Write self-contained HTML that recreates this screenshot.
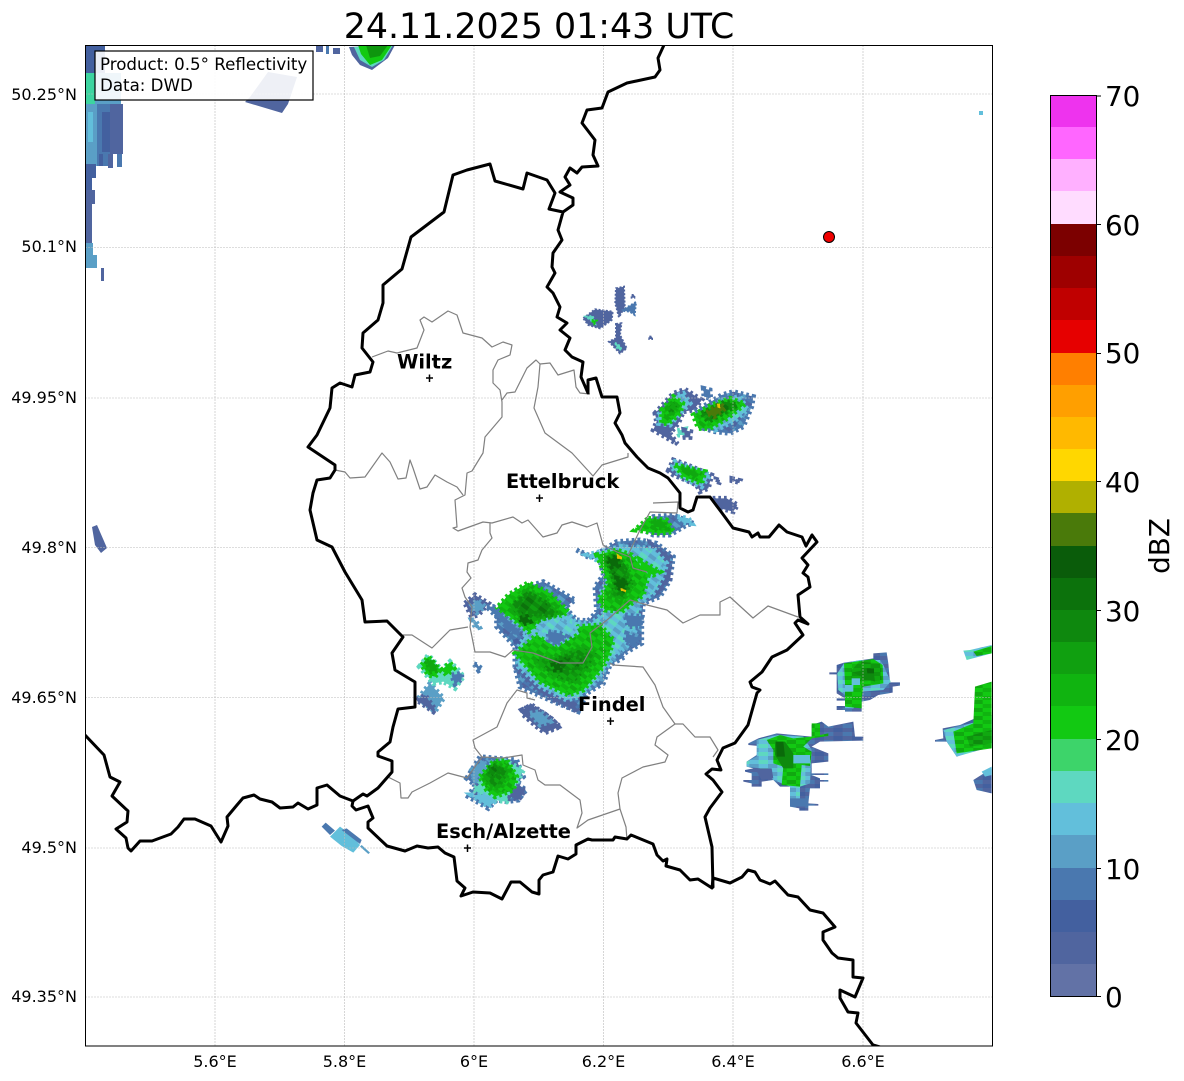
<!DOCTYPE html>
<html lang="en">
<head>
<meta charset="utf-8">
<title>Radar</title>
<style>
html,body{margin:0;padding:0;background:#fff;width:1184px;height:1081px;overflow:hidden}
svg{display:block}
text{font-family:"DejaVu Sans","Liberation Sans",sans-serif;fill:#000}
.g{stroke:#bbb;stroke-width:.6;stroke-dasharray:2 1;fill:none}
.t{font-size:16px}
.c{font-size:27.8px}
.l{font-size:19.4px;font-weight:bold}
.bd{fill:none;stroke:#000;stroke-width:3;stroke-linejoin:round;stroke-linecap:round}
.cn{fill:none;stroke:#808080;stroke-width:1.2;stroke-linejoin:round}
.e{stroke-width:15;stroke-dasharray:8 9}
.a{fill:#50659f;stroke:#50659f}
.b{fill:#43609f;stroke:#43609f}
.d{fill:#4a78af;stroke:#4a78af}
.f{fill:#5a9fc6;stroke:#5a9fc6}
.h{fill:#62bfdb;stroke:#62bfdb}
.i{fill:#5ed8c0;stroke:#5ed8c0}
.j{fill:#3dd46a;stroke:#3dd46a}
.k{fill:#12c912;stroke:#12c912}
.m{fill:#10a810;stroke:#10a810}
.n{fill:#0e8a0e;stroke:#0e8a0e}
.o{fill:#0a6a0a;stroke:#0a6a0a}
.p{fill:#4a7a0a;stroke:#4a7a0a}
.q{fill:#e6c200;stroke:#e6c200}
.K{fill:url(#pk);stroke:#12c912}
.M{fill:url(#pm);stroke:#10a810}
.N{fill:url(#pn);stroke:#0e8a0e}
.H{fill:url(#ph);stroke:#62bfdb}
.D{fill:url(#pd);stroke:#4a78af}
.K2{fill:url(#qk)}
.M2{fill:url(#qm)}
.H2{fill:url(#qh)}
.A2{fill:url(#qa)}
</style>
</head>
<body>
<svg width="1184" height="1081" viewBox="0 0 1184 1081" xmlns="http://www.w3.org/2000/svg">
<defs>
<clipPath id="ax"><rect x="85.5" y="45.5" width="907" height="1000.5"/></clipPath>
<pattern id="pk" width="48" height="24" patternUnits="userSpaceOnUse" patternTransform="rotate(37)"><rect width="48" height="24" fill="#12c912"/><rect width="24" height="12" fill="#10b410"/><rect x="24" y="12" width="24" height="12" fill="#10a810"/></pattern>
<pattern id="pm" width="48" height="24" patternUnits="userSpaceOnUse" patternTransform="rotate(37)"><rect width="48" height="24" fill="#10a810"/><rect width="24" height="12" fill="#0e960e"/><rect x="24" y="12" width="24" height="12" fill="#0e8a0e"/></pattern>
<pattern id="pn" width="48" height="24" patternUnits="userSpaceOnUse" patternTransform="rotate(37)"><rect width="48" height="24" fill="#0e8a0e"/><rect width="24" height="12" fill="#0c720c"/><rect x="24" y="12" width="24" height="12" fill="#10a010"/></pattern>
<pattern id="ph" width="48" height="24" patternUnits="userSpaceOnUse" patternTransform="rotate(37)"><rect width="48" height="24" fill="#62bfdb"/><rect width="24" height="12" fill="#5ed8c0"/><rect x="24" y="12" width="24" height="12" fill="#5a9fc6"/></pattern>
<pattern id="pd" width="48" height="24" patternUnits="userSpaceOnUse" patternTransform="rotate(37)"><rect width="48" height="24" fill="#4a78af"/><rect width="24" height="12" fill="#50659f"/><rect x="24" y="12" width="24" height="12" fill="#5a9fc6"/></pattern>
<pattern id="qk" width="56" height="24" patternUnits="userSpaceOnUse"><rect width="56" height="24" fill="#12c912"/><rect width="28" height="12" fill="#10b410"/><rect x="28" y="12" width="28" height="12" fill="#10a810"/></pattern>
<pattern id="qm" width="56" height="24" patternUnits="userSpaceOnUse"><rect width="56" height="24" fill="#10a810"/><rect width="28" height="12" fill="#0e960e"/><rect x="28" y="12" width="28" height="12" fill="#0e8a0e"/></pattern>
<pattern id="qh" width="56" height="24" patternUnits="userSpaceOnUse"><rect width="56" height="24" fill="#62bfdb"/><rect width="28" height="12" fill="#5ed8c0"/><rect x="28" y="12" width="28" height="12" fill="#5a9fc6"/></pattern>
<pattern id="qa" width="56" height="24" patternUnits="userSpaceOnUse"><rect width="56" height="24" fill="#50659f"/><rect width="28" height="12" fill="#43609f"/><rect x="28" y="12" width="28" height="12" fill="#4a78af"/></pattern>
</defs>

<text x="539" y="38" text-anchor="middle" style="font-size:34.8px">24.11.2025 01:43 UTC</text>

<g clip-path="url(#ax)">
<!-- top-left block echoes -->
<g>
<rect x="85" y="45" width="20" height="30" fill="#43609f"/>
<rect x="85" y="73" width="10" height="32" fill="#3dd4a0"/>
<rect x="95" y="73" width="26" height="32" fill="#5a9fc6"/>
<rect x="85" y="104" width="12" height="62" fill="#5a9fc6"/>
<rect x="88" y="112" width="5" height="30" fill="#62bfdb"/>
<rect x="97" y="104" width="13" height="62" fill="#4a78af"/>
<rect x="102" y="112" width="8" height="40" fill="#43609f"/>
<rect x="110" y="104" width="13" height="50" fill="#50659f"/>
<rect x="108" y="154" width="5" height="14" fill="#50659f"/>
<rect x="117" y="154" width="5" height="13" fill="#4a78af"/>
<rect x="99" y="154" width="4" height="12" fill="#43609f"/>
<rect x="85" y="164" width="11" height="14" fill="#43609f"/>
<rect x="85" y="176" width="7" height="34" fill="#43609f"/>
<rect x="85" y="190" width="10" height="14" fill="#50659f"/>
<rect x="85" y="204" width="7" height="40" fill="#50659f"/>
<rect x="85" y="243" width="8" height="25" fill="#5a9fc6"/>
<rect x="92" y="255" width="5" height="13" fill="#5a9fc6"/>
<rect x="101" y="268" width="3" height="13" fill="#50659f"/>
<polygon points="250,97 268,72 297,77 288,104 282,113 245,102" fill="#50659f"/>
<rect x="316" y="45" width="7" height="7" fill="#50659f"/>
<rect x="326" y="46" width="3" height="8" fill="#4a78af"/>
<rect x="333" y="48" width="7" height="6" fill="#50659f"/>
</g>
<!-- top echo -->
<g>
<polygon points="349,47 395,45 388,58 372,70 360,65 352,55" fill="#50659f"/>
<polygon points="354,47 393,45 384,60 372,67 360,60" fill="#5ed8c0"/>
<polygon points="358,45 392,45 382,60 370,65 361,54" fill="#12c912"/>
<polygon points="366,45 388,45 380,56 370,58" fill="#0e960e"/>
</g>
<rect x="979" y="111" width="4" height="4" fill="#62bfdb"/>
<polygon points="92,527 97,525 107,548 101,553 95,545" fill="#50659f"/>

<!-- small echoes NE -->
<g transform="translate(540 40) scale(.33333)" class="e" style="stroke-width:6;stroke-dasharray:6 5">
<polygon class="a" points="130,835 165,808 218,815 215,840 180,865 145,855"/>
<polygon class="i" points="137,830 158,828 165,850"/>
<polygon class="k" points="155,840 170,842 162,852"/>
<polygon class="a" points="228,745 252,740 254,800 237,832 226,790"/>
<polygon class="d" points="245,812 288,786 284,825 270,815"/>
<polygon class="a" points="228,852 244,850 240,885 260,925 240,940 207,905 228,895"/>
<polygon class="i" points="225,908 240,918 245,930 232,925"/>
<rect class="a" x="328" y="890" width="8" height="7"/>
<rect class="a" x="275" y="765" width="8" height="8"/>
</g>

<!-- double echo -->
<g transform="translate(640 380) scale(.33333)" class="e">
<polygon class="a" points="45,100 100,40 135,28 185,60 160,90 130,95 115,130 90,160 112,192 40,150 50,125"/>
<polygon class="H" points="55,105 100,50 130,40 150,70 120,100 90,135 55,130"/>
<polygon class="K" points="65,90 100,50 128,70 120,100 85,130 65,130"/>
<polygon class="M" points="82,85 100,65 112,80 90,110"/>
<polygon class="i" points="112,152 135,148 130,165 118,165"/>
<polygon class="a" points="132,150 152,155 150,172 135,172"/>
<polygon class="d" points="190,25 210,30 212,55 192,50"/>
<polygon class="D" points="165,95 245,45 280,35 340,50 335,80 310,140 270,160 225,155 190,145"/>
<polygon class="H" points="175,100 250,60 300,50 322,90 280,125 225,150"/>
<polygon class="K" points="160,105 215,75 270,55 315,72 262,115 210,145 175,145"/>
<polygon class="N" points="185,100 255,65 292,75 240,105 205,125"/>
<polygon class="p" points="200,98 240,72 255,85 222,110"/>
<polygon class="q" points="232,72 240,72 240,84 232,82" style="stroke-width:2"/>
</g>
<g transform="translate(640 380) scale(.33333)" class="e">
<polygon class="a" points="85,272 100,240 130,250 215,285 205,325 180,335 170,315 125,295 100,285"/>
<polygon class="H" points="95,262 105,245 210,285 185,320 130,295"/>
<polygon class="K" points="105,255 195,275 185,310 130,290"/>
<polygon class="m" points="125,262 170,275 165,295"/>
<polygon class="a" points="228,298 240,302 238,307 228,304"/>
<polygon class="a" points="276,296 300,302 298,307 276,302"/>
<polygon class="a" points="218,355 260,355 292,375 280,395 240,385"/>
</g>

<!-- big main echo -->
<g transform="translate(440 500) scale(.33333)" class="e">
<polygon class="D" points="600,85 640,50 700,45 760,70 740,75 690,105 640,105"/>
<polygon class="K" points="625,55 680,60 700,95 660,100 585,90"/>
<polygon class="m" points="640,60 670,65 680,85 640,80"/>
<polygon class="h" points="712,50 745,55 755,70 730,68"/>

<polygon class="D" points="410,150 450,175 530,125 600,120 650,130 700,170 690,240 660,290 610,310 605,370 605,430 545,465 555,470 510,495 490,550 440,580 415,635 340,605 240,560 225,500 225,440 170,380 170,330 230,270 310,245 405,300 375,322 410,360 445,362 470,335 465,260 490,225 480,180"/>
<polygon class="a" points="630,130 690,170 690,235 650,285 640,200"/>
<polygon class="a" points="225,500 290,570 340,600 415,635 400,610 300,530"/>
<polygon class="b" points="228,425 245,422 280,460 240,455"/>
<polygon class="H" points="540,140 640,145 680,190 670,230 640,280 600,310 590,380 570,430 520,470 500,500 470,540 420,590 380,600 300,560 235,500 230,450 260,400 200,360 180,330 260,270 370,322 405,365 450,372 490,340 480,280 510,230 490,190 440,165"/>
<polygon class="d" points="555,345 605,350 600,378 565,380"/>
<polygon class="d" points="560,400 600,415 580,435 555,425"/>
<polygon class="K" points="165,330 205,285 265,248 330,280 385,335 350,355 300,375 265,395 210,350"/>
<polygon class="K" points="225,460 290,405 345,440 415,380 480,375 520,420 505,470 490,500 430,570 385,585 300,545"/>
<polygon class="K" points="470,165 530,150 575,165 625,225 610,285 575,310 545,335 495,330 475,300 505,250 485,200"/>
<polygon class="k" points="600,180 660,215 640,225 605,210"/>
<polygon class="H" points="300,365 360,352 405,372 415,395 350,435 315,405 285,395"/>
<polygon class="d" points="325,395 360,400 380,410 350,435 325,420"/>
<polygon class="M" points="210,320 265,270 320,300 360,340 300,360 250,370"/>
<polygon class="M" points="280,480 350,470 420,440 470,460 440,510 400,550 340,530"/>
<polygon class="M" points="490,170 530,160 560,200 580,250 550,300 510,290 520,240"/>
<polygon class="N" points="225,310 265,280 320,310 340,345 290,340 250,345"/>
<polygon class="N" points="330,490 390,465 430,475 410,510 360,510"/>
<polygon class="N" points="500,175 530,165 550,200 565,255 540,285 525,250"/>
<polygon class="o" points="505,180 530,170 535,195 515,200"/>
<polygon class="o" points="240,355 260,350 270,365 250,372"/>
<polygon class="o" points="340,495 360,490 360,510 345,510"/>
<polygon class="o" points="530,235 560,245 550,270 530,260"/>
<polygon class="q" points="530,162 545,170 545,178 532,175" style="stroke-width:2"/>
<polygon class="q" points="542,265 558,270 556,276 544,272" style="stroke-width:2"/>
<polygon class="a" points="75,310 105,285 145,310 115,345 95,350"/>
<polygon class="f" points="90,320 112,300 135,320 110,338"/>
<polygon class="d" points="140,320 160,320 240,395 225,405"/>
<polygon class="f" points="95,360 105,360 118,382 108,385"/>
<polygon class="f" points="102,492 112,495 125,506 116,510"/>
<polygon class="a" points="245,630 275,615 340,660 355,680 310,695 270,660"/>
<polygon class="f" points="270,640 300,635 335,665 305,680"/>
</g>

<!-- left echo -->
<g transform="translate(380 620) scale(.33333)" class="e">
<polygon class="f" points="115,235 150,190 190,235 165,275"/>
<polygon class="a" points="110,240 135,225 165,268 160,275"/>
<polygon class="i" points="118,140 145,105 185,150 210,125 235,150 250,170 225,205 190,185 160,190"/>
<polygon class="K" points="125,135 145,110 180,150 165,170 145,165"/>
<polygon class="m" points="140,125 155,120 172,150 155,155"/>
<polygon class="k" points="185,150 210,128 222,145 200,165"/>
<polygon class="d" points="215,165 245,160 245,178 225,192"/>
<polygon class="d" points="282,132 292,135 304,148 296,152"/>
<!-- Esch echo -->
<polygon class="D" points="260,475 300,410 350,415 410,420 430,470 410,490 438,510 415,540 380,545 350,540 325,565 265,530 285,495"/>
<polygon class="i" points="370,420 430,450 410,490 380,545 340,540 280,510 300,490 320,440"/>
<polygon class="h" points="275,525 325,525 350,540 325,560"/>
<polygon class="f" points="275,450 310,420 320,450 285,480"/>
<polygon class="a" points="395,495 435,510 415,540 390,530"/>
<polygon class="K" points="300,470 340,425 380,420 410,470 400,510 345,530 320,510"/>
<polygon class="M" points="310,470 345,430 390,450 360,505 330,500"/>
<polygon class="N" points="325,445 350,435 365,460 340,475"/>
<!-- below-big echo -->
<polygon class="a" points="425,280 445,255 500,285 540,320 495,338 470,320"/>
<polygon class="f" points="450,280 480,275 510,305 480,315"/>
</g>

<!-- esch lower-left -->
<g transform="translate(85 720) scale(.33333)">
<polygon points="710,320 722,308 750,332 735,345" fill="#4a78af"/>
<polygon points="735,350 765,320 800,345 825,375 805,398 770,378" fill="#62bfdb"/>
<polygon points="770,330 785,325 830,360 825,372" fill="#4a78af"/>
<polygon points="825,380 830,375 855,398 850,402" fill="#5a9fc6"/>
</g>

<!-- east echoes -->
<g transform="translate(740 640) scale(.33333)">
<polygon class="A2" points="400,40 440,37 445,70 450,127 480,127 480,137 458,140 458,158 415,165 390,180 365,185 365,215 315,215 315,210 290,210 290,198 315,198 315,182 290,182 290,175 315,175 290,160 290,103 268,103 268,97 290,97 290,75 312,68 400,55"/>
<polygon class="H2" points="292,100 312,70 360,60 420,60 430,75 452,125 430,150 365,155 365,175 340,205 315,205 315,165 295,150"/>
<polygon class="K2" points="312,70 400,57 428,75 430,130 370,140 365,175 365,205 315,200 315,130"/>
<polygon class="M2" points="335,90 358,65 420,70 425,120 365,125 335,115"/>
<polygon class="n" points="338,97 400,85 405,125 365,110" stroke="none" style="stroke:none"/>
<polygon class="o" points="380,85 402,85 402,100 382,100" style="stroke:none"/>
<polygon class="h" points="335,115 360,115 360,135 335,135" style="stroke:none"/>
<polygon class="h" points="315,135 340,135 340,155 315,155" style="stroke:none"/>

<polygon class="A2" points="25,310 55,295 110,280 215,290 215,255 245,245 265,260 340,245 345,290 370,290 370,302 240,305 215,320 240,330 265,340 265,365 215,370 215,400 265,400 265,405 215,405 240,415 240,420 265,420 265,425 240,425 240,445 210,445 205,490 235,492 235,497 205,497 205,512 178,512 178,505 150,500 150,440 120,440 100,420 65,425 65,440 35,440 35,430 10,425 10,420 35,420 35,400 15,395 15,390 40,385 20,380 20,365 50,345 55,318 25,315"/>
<polygon class="d" points="150,475 205,475 205,500 150,500" style="stroke:none"/>
<polygon class="H2" points="50,300 110,285 190,290 215,330 210,430 180,440 180,475 150,475 150,440 100,420 60,385 20,380 20,365 50,350"/>
<polygon class="a" points="45,385 95,385 100,415 65,420" style="stroke:none"/>
<polygon class="K2" points="80,300 120,285 160,295 215,290 215,250 240,250 240,285 265,280 265,288 215,295 190,320 215,335 210,378 185,375 180,440 125,435 130,380 100,370 100,330"/>
<polygon class="n" points="105,305 135,305 160,340 160,385 130,385 105,345" style="stroke:none"/>
<polygon class="o" points="108,305 130,305 135,350 110,350" style="stroke:none"/>
<polygon class="h" points="160,345 210,345 210,370 160,370" style="stroke:none"/>

<polygon class="H2" points="670,32 690,30 755,15 755,40 680,60"/>
<polygon class="K2" points="700,35 755,18 755,40 710,48"/>
<polygon class="A2" points="585,300 610,295 608,265 660,255 705,235 755,225 755,310 650,350 620,305 585,305"/>
<polygon class="H2" points="610,270 660,258 755,235 755,320 650,350 620,305"/>
<polygon class="K2" points="640,275 700,250 705,140 755,125 755,325 650,340"/>
<polygon class="M2" points="680,290 755,270 755,310 690,320"/>
<polygon class="A2" points="700,420 755,385 755,460 710,450"/>
<polygon class="h" points="725,395 755,380 755,405 735,410" style="stroke:none"/>
</g>

<!-- gridlines -->
<g class="g">
<path d="M215 45V1046M344.5 45V1046M474 45V1046M603.5 45V1046M733 45V1046M863 45V1046"/>
<path d="M85 94H992M85 247.5H992M85 398H992M85 547.5H992M85 697.5H992M85 848H992M85 997H992"/>
</g>

<!-- canton lines -->
<g class="cn">
<path d="M372 357L388 351 397 353 417 348 424 330 420 320 424 317 432 322 448 311 457 315 463 333 482 338 492 347 503 342 512 345 510 355 498 360 493 370 493 383 500 390 502 402 502 417 485 437 483 453 472 471 467 473 465 495 455 500 457 527 453 528 458 531 483 522 492 523 513 517 522 523 528 520 543 537 557 533 562 525 572 522 587 527 597 523 603 545 617 552 630 557 633 568 647 572"/>
<path d="M653 503L678 502 677 513 650 512 640 530 628 555"/>
<path d="M490 523L490 533 492 538 482 550 478 560 468 563 467 572 471 578 462 588 465 597 472 607 470 627 475 652 490 652 505 657 513 650 533 653 560 663 583 663 592 647 590 633 607 620 630 600 647 605 667 610 683 623 700 615 720 615 720 602 730 597 753 618 768 606 798 617"/>
<path d="M403 635L412 635 432 648 450 630 468 627"/>
<path d="M535 700L527 698 527 693 517 690 507 703 497 727 473 740 475 748 482 757 467 778 448 773 430 783 412 792 408 798 401 798 400 783 388 777"/>
<path d="M482 757L503 758 522 755 523 765 535 770 538 780 545 785 560 785 580 800 582 813 577 828 588 820 620 809 626 827 627 840"/>
<path d="M620 809L618 793 622 778 643 767 665 762 668 755 655 745 657 737 675 724 663 707 655 685 643 667 613 665 610 663"/>
<path d="M675 724L683 724 695 737 710 737 718 750 713 757"/>
<path d="M502 400L507 393 515 392 527 368 536 360 540 364 538 387 534 408 545 433 572 453 593 476 602 465 628 457 628 453"/>
<path d="M540 364L550 363 558 375 574 370 576 387 580 393 590 394"/>
<path d="M335 470L345 472 350 478 365 477 382 453 390 462 398 479 406 478 410 460 413 468 420 489 427 487 435 475 447 482 457 487 463 495"/>
</g>

<!-- borders -->
<g class="bd">
<path d="M85 735L104 755 110 777 120 782 112 796 128 811 127 822 116 829 126 838 128 848 131 851 140 841 152 841 171 834 178 827 184 819 195 819 211 826 221 842 228 826 227 817 237 805 243 798 254 795 260 799 272 802 280 808 293 807 298 803 308 809 317 805 317 788 327 785 340 796 353 801 352 806 356 810 368 806 373 818 368 822 368 828 387 846 405 851 417 846 428 848 438 847 445 853 454 857 457 881 465 888 461 896 473 892 490 893 502 899 511 882 520 882 532 892 539 894 539 880 543 875 553 872 558 856 568 859 576 854 576 845 588 839 592 840 613 840 615 837 627 839 631 835 653 844 657 855 663 861 667 859 666 866 680 870 690 880 698 879 712 888 713 878 730 883 742 877 748 870 755 872 760 880 770 884 775 881 788 895 798 897 810 910 823 913 835 927 823 932 823 940 832 953 838 958 853 960 853 977 863 978 855 997 840 990 840 998 848 1012 858 1013 856 1023 873 1045 880 1047"/>
<path d="M713 887L712 847 705 817 710 808 722 792 713 780 706 774 712 769 721 770 717 760 723 748 735 743 748 725 757 693 760 690 752 687 750 682 762 672 772 657 787 650 803 635 795 623 798 620 808 624 800 617 798 595 810 587 808 577 803 573 808 565 802 558 817 542 812 535 806 546 802 537 787 532 779 525 769 537 760 537 758 533 752 537 749 532 733 528 722 513 710 497 697 497 693 510 688 512 680 508 680 493 668 478 660 473 648 468 637 457 625 443 622 435 615 423 620 413 617 397 602 397 596 378 588 380 588 393 581 377 583 362 572 357 565 350 570 338 560 330 567 323 557 317 560 307 553 293 547 287 555 273 552 267 553 253 562 240 558 230 563 212 549 209 555 193 547 180 527 173 523 189 495 181 490 164 467 170 453 175 444 212 411 237 402 269 383 285 383 303 378 320 363 333 362 348 373 362 370 372 355 375 352 387 340 383 332 388 330 408 317 435 308 447 335 465 335 470 330 478 317 480 313 493 310 510 317 540 332 547 345 572 362 600 365 622 387 621 403 637 392 653 395 670 415 682 415 707 398 709 393 727 390 742 378 752 378 756 392 761 392 772 378 788 367 796 363 794 353 801"/>
<path d="M563 212L573 205 573 198 560 192 570 185 565 177 570 168 577 173 582 167 598 166 593 155 595 140 582 123 587 110 602 108 608 92 627 83 655 77 660 70 658 58 664 45"/>
</g>

<!-- markers -->
<g stroke="#000" stroke-width="1.5" fill="none">
<path d="M426 378H433M429.5 374.500V382M536 498H543M539.500 494.500V502M607 721H614M610.500 717.500V725M464 848H471M467.500 844.500V852"/>
</g>
<circle cx="829" cy="237" r="5.500" fill="#f00000" stroke="#000" stroke-width="1"/>
</g>

<text class="l" x="397" y="368.500">Wiltz</text>
<text class="l" x="506" y="488">Ettelbruck</text>
<text class="l" x="578" y="711">Findel</text>
<text class="l" x="436" y="838">Esch/Alzette</text>

<!-- legend -->
<rect x="95" y="51" width="218" height="49" fill="#fff" fill-opacity=".9" stroke="#000" stroke-width="1.200"/>
<text x="100" y="70" style="font-size:16.670px">Product: 0.5° Reflectivity</text>
<text x="100" y="91" style="font-size:16.670px">Data: DWD</text>

<!-- axes frame -->
<rect x="85.500" y="45.500" width="907" height="1000.500" fill="none" stroke="#000" stroke-width="1"/>

<!-- y labels -->
<g class="t" text-anchor="end">
<text x="77" y="100">50.25°N</text>
<text x="77" y="252">50.1°N</text>
<text x="77" y="403">49.95°N</text>
<text x="77" y="553">49.8°N</text>
<text x="77" y="703">49.65°N</text>
<text x="77" y="853">49.5°N</text>
<text x="77" y="1002">49.35°N</text>
</g>
<g class="t" text-anchor="middle">
<text x="215" y="1067">5.6°E</text>
<text x="344.500" y="1067">5.8°E</text>
<text x="474" y="1067">6°E</text>
<text x="603.500" y="1067">6.2°E</text>
<text x="733" y="1067">6.4°E</text>
<text x="863" y="1067">6.6°E</text>
</g>

<!-- colorbar -->
<g shape-rendering="crispEdges">
<rect x="1051" y="964" width="45" height="32" fill="#6272a6"/>
<rect x="1051" y="932" width="45" height="32" fill="#50659f"/>
<rect x="1051" y="900" width="45" height="32" fill="#43609f"/>
<rect x="1051" y="868" width="45" height="32" fill="#4a78af"/>
<rect x="1051" y="835" width="45" height="33" fill="#5a9fc6"/>
<rect x="1051" y="803" width="45" height="32" fill="#62bfdb"/>
<rect x="1051" y="771" width="45" height="32" fill="#5ed8c0"/>
<rect x="1051" y="739" width="45" height="32" fill="#3dd46a"/>
<rect x="1051" y="706" width="45" height="33" fill="#12c912"/>
<rect x="1051" y="674" width="45" height="32" fill="#10b410"/>
<rect x="1051" y="642" width="45" height="32" fill="#10a010"/>
<rect x="1051" y="610" width="45" height="32" fill="#0e880e"/>
<rect x="1051" y="578" width="45" height="32" fill="#0c720c"/>
<rect x="1051" y="546" width="45" height="32" fill="#0a5c0a"/>
<rect x="1051" y="513" width="45" height="33" fill="#4a7a0a"/>
<rect x="1051" y="481" width="45" height="32" fill="#b0b000"/>
<rect x="1051" y="449" width="45" height="32" fill="#ffd700"/>
<rect x="1051" y="417" width="45" height="32" fill="#ffb900"/>
<rect x="1051" y="385" width="45" height="32" fill="#ff9f00"/>
<rect x="1051" y="353" width="45" height="32" fill="#ff7f00"/>
<rect x="1051" y="320" width="45" height="33" fill="#e60000"/>
<rect x="1051" y="288" width="45" height="32" fill="#c00000"/>
<rect x="1051" y="256" width="45" height="32" fill="#9e0000"/>
<rect x="1051" y="224" width="45" height="32" fill="#7c0000"/>
<rect x="1051" y="191" width="45" height="33" fill="#ffdcff"/>
<rect x="1051" y="159" width="45" height="32" fill="#ffb0ff"/>
<rect x="1051" y="127" width="45" height="32" fill="#ff66ff"/>
<rect x="1051" y="95" width="45" height="32" fill="#ee33ee"/>
</g>
<rect x="1050.500" y="95.500" width="46" height="901" fill="none" stroke="#000" stroke-width="1"/>
<path d="M1096 96H1101M1096 224.500H1101M1096 353.500H1101M1096 481.500H1101M1096 610.500H1101M1096 739.500H1101M1096 868.500H1101M1096 996.500H1101" stroke="#000" stroke-width="1"/>
<g class="c">
<text x="1105" y="106">70</text>
<text x="1105" y="235">60</text>
<text x="1105" y="363">50</text>
<text x="1105" y="492">40</text>
<text x="1105" y="621">30</text>
<text x="1105" y="750">20</text>
<text x="1105" y="879">10</text>
<text x="1105" y="1007">0</text>
</g>
<text class="c" transform="translate(1169 546) rotate(-90)" text-anchor="middle">dBZ</text>
</svg>
</body>
</html>
